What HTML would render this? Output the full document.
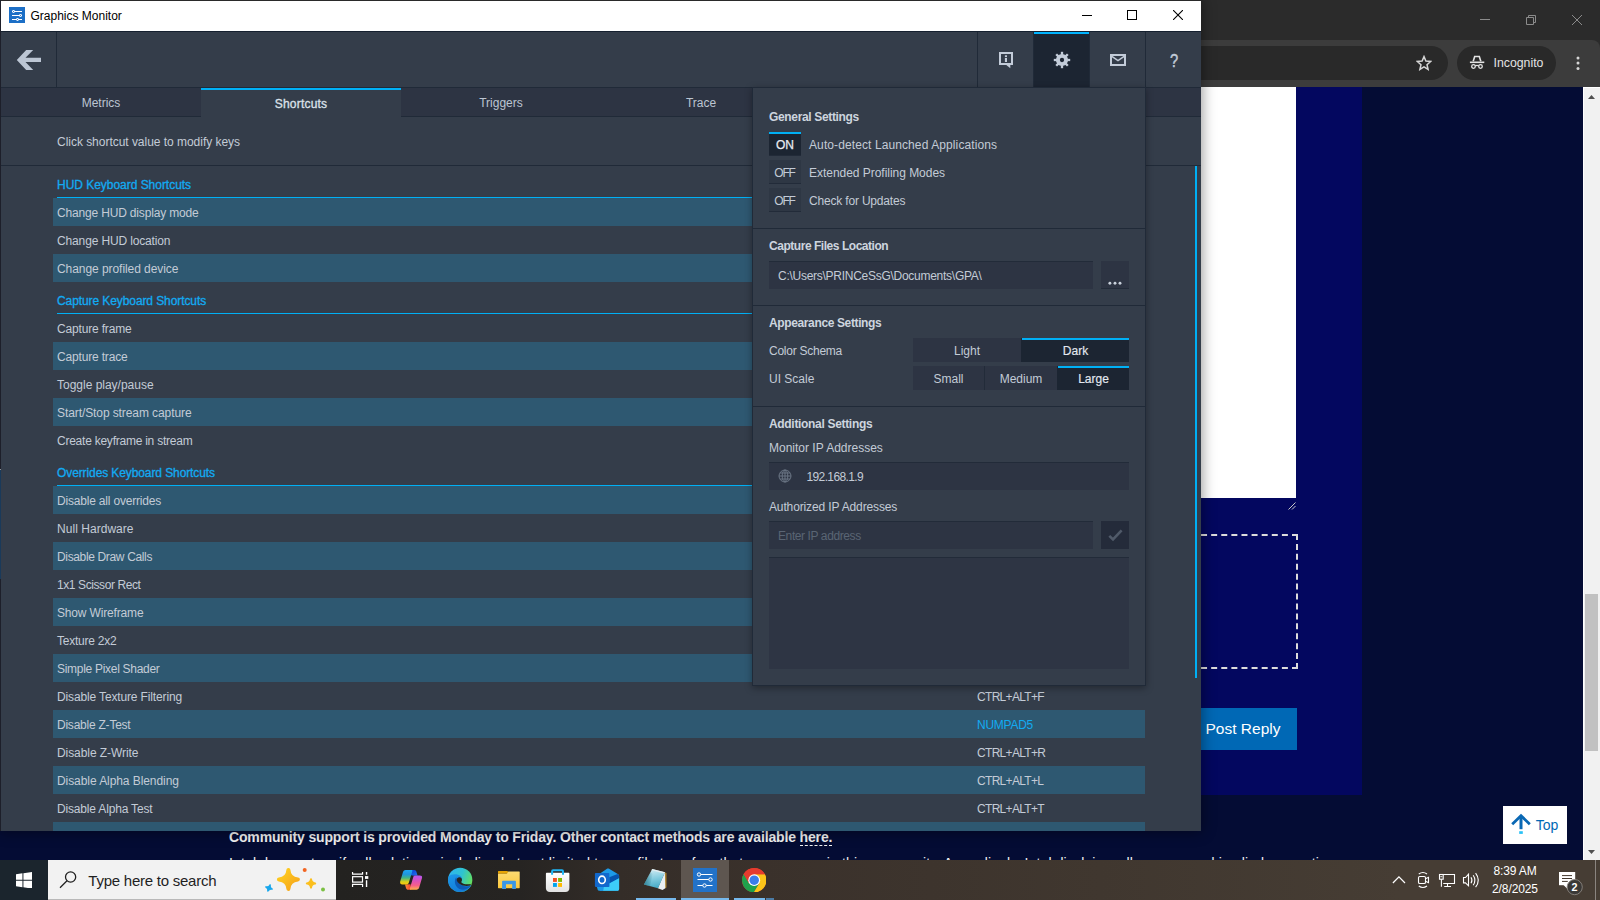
<!DOCTYPE html>
<html>
<head>
<meta charset="utf-8">
<title>Graphics Monitor</title>
<style>
*{box-sizing:border-box;margin:0;padding:0}
html,body{width:1600px;height:900px;overflow:hidden;background:#040c34;font-family:"Liberation Sans",sans-serif;}
.abs{position:absolute}
#screen{position:absolute;left:0;top:0;width:1600px;height:900px;overflow:hidden}

/* ---------- Chrome window (behind) ---------- */
#chrome{position:absolute;left:0;top:0;width:1600px;height:860px;background:#040c34;overflow:hidden}
#cr-frame{position:absolute;left:0;top:0;width:1600px;height:52px;background:#2b2b2b}
#cr-toolbar{position:absolute;left:0;top:40px;width:1600px;height:47px;background:#3c3c3c;border-top-right-radius:8px}
.pill{position:absolute;top:46px;height:34px;background:#292929;border-radius:17px}
#cr-page{position:absolute;left:0;top:87px;width:1583px;height:773px;background:#040c34}
#cr-scroll{position:absolute;left:1583px;top:87px;width:17px;height:773px;background:#f1f1f1;border-left:1px solid #fff;border-top:1px solid #fff}
#cr-thumb{position:absolute;left:1px;top:506px;width:13px;height:157px;background:#c1c1c1}

/* ---------- GPA window ---------- */
#gpa{position:absolute;left:0;top:0;width:1201px;height:831px;background:#343d4a;overflow:hidden;box-shadow:0 0 13px 1px rgba(0,0,0,.42);color:#c3cbd6;font-size:12px}
#gpa-title{position:absolute;left:0;top:0;width:1201px;height:31px;background:#fff;border-top:1px solid #2a2a2a}
#gpa-lborder{position:absolute;left:0;top:0;width:1px;height:831px;background:linear-gradient(180deg,#1d1f2a 0,#1d1f2a 469px,#8f9499 469px,#8f9499 470px,#1a3a5a 470px,#1a3a5a 579px,#1d1f2a 579px);z-index:50}
#gpa-tool{position:absolute;left:0;top:31px;width:1201px;height:57px;background:#343d4a;border-bottom:1px solid #202a38}
.tbtn{position:absolute;top:0;width:56px;height:56px;border-left:1px solid #202a38}
#tabs{position:absolute;left:0;top:88px;width:1201px;height:29px;background:#2d3443;border-bottom:1px solid #202a38}
.tab{position:absolute;top:0;height:28px;width:200px;text-align:center;line-height:30px;color:#bcc5d2;font-size:12px}
.tab.act{background:#343d4a;border-top:2px solid #00b0f5;line-height:28px;height:29px;color:#dce2ea;-webkit-text-stroke:.3px #dce2ea;letter-spacing:.2px}
#hint{position:absolute;left:0;top:117px;width:1201px;height:49px;border-bottom:1px solid #202a38}
.row{position:absolute;left:53px;width:1092px;height:28px;line-height:30px;padding-left:4px;white-space:nowrap}
.row.hl{background:#2e5871}
.row .k{position:absolute;left:924px;top:0;letter-spacing:-0.68px}
.hdr{position:absolute;left:57px;width:1088px;height:32px;border-bottom:1px solid #00b0f5;color:#12abf2;line-height:38px;white-space:nowrap;-webkit-text-stroke:.3px #12abf2}

/* settings panel */
#panel{position:absolute;left:752px;top:87px;width:394px;height:599px;background:#343d4a;border:1px solid #202a38;box-shadow:0 2px 7px rgba(0,0,0,.35);z-index:20}
#panel .sec{position:absolute;left:-1px;width:392px;height:1px;background:#202a38}
#panel .h{position:absolute;line-height:14px;margin-top:1px;font-weight:700;color:#cdd5df;white-space:nowrap}
#panel .l{position:absolute;white-space:nowrap;line-height:14px;margin-top:1px}
.tog{position:absolute;width:32px;height:24px;text-align:center;line-height:14px;padding-top:6px;border-bottom:1px solid #222b39;background:#2e3744}
.tog.on{background:#1c2532;border-top:2px solid #00b0f5;padding-top:4px;color:#e8ecf2;-webkit-text-stroke:.25px #e8ecf2}
.inp{position:absolute;height:28px;background:#2d3443;line-height:30px;padding-left:9px;white-space:nowrap}
.seg{position:absolute;height:24px;background:#2d3443;text-align:center;line-height:26px}
.seg.on{background:#1c2532;border-left:1px solid #1c2532;box-shadow:inset 0 2px 0 #00b0f5;color:#e4e9f0;-webkit-text-stroke:.15px #e4e9f0}

/* ---------- Taskbar ---------- */
#taskbar{position:absolute;left:0;top:860px;width:1600px;height:40px;background:linear-gradient(90deg,#1b252d 0,#1b252d 48px,#232220 340px,#262422 520px,#342d28 620px,#3a312b 760px,#40372f 1100px,#463d34 1400px,#463d34 1600px);z-index:100;color:#fff}
#search{position:absolute;left:48px;top:0;width:288px;height:40px;background:#f2f2f2}
</style>
</head>
<body>
<div id="screen">

<!-- ================= CHROME ================= -->
<div id="chrome">
  <div id="cr-frame"></div>
  <div id="cr-toolbar"></div>
  <div class="pill" style="left:900px;width:548px"></div>
  <div class="pill" style="left:1457px;width:99px"></div>

  <!-- chrome window controls -->
  <svg class="abs" style="left:1480px;top:19px" width="10" height="1"><rect width="10" height="1" fill="#8b8b8b"/></svg>
  <svg class="abs" style="left:1526px;top:15px" width="10" height="10" viewBox="0 0 10 10"><path d="M.5 2.5H7.5V9.5H.5Z" fill="none" stroke="#8b8b8b" stroke-width="1"/><path d="M2.5 2.5V.5H9.5V7.5H7.5" fill="none" stroke="#8b8b8b" stroke-width="1"/></svg>
  <svg class="abs" style="left:1572px;top:15px" width="10" height="10"><path d="M0 0L10 10M10 0L0 10" stroke="#8b8b8b" stroke-width="1" fill="none"/></svg>
  <!-- star -->
  <svg class="abs" style="left:1416px;top:55px" width="16" height="16" viewBox="0 0 16 16"><path d="M8 1.6L9.9 6.1L14.7 6.5L11 9.7L12.1 14.4L8 11.9L3.9 14.4L5 9.7L1.3 6.5L6.1 6.1Z" fill="none" stroke="#d6d6d6" stroke-width="1.5" stroke-linejoin="miter"/></svg>
  <!-- incognito -->
  <svg class="abs" style="left:1469px;top:55px" width="16" height="15" viewBox="0 0 16 15"><g fill="none" stroke="#e3e3e3"><path d="M4.200 6.300L5.700 1.500H10.300L11.800 6.300" stroke-width="1.600"/><path d="M0.900 7.300H15.300" stroke-width="1.600"/><circle cx="4.500" cy="11.500" r="1.800" stroke-width="1.300"/><circle cx="11.500" cy="11.500" r="1.800" stroke-width="1.300"/><path d="M6.200 11Q8 9.900 9.800 11" stroke-width="1.200"/></g></svg>
  <div class="abs" style="left:1493.5px;top:56px;font-size:12.3px;line-height:15px;color:#e3e3e3;white-space:nowrap">Incognito</div>
  <svg class="abs" style="left:1576px;top:56px" width="4" height="14"><circle cx="2" cy="2" r="1.5" fill="#d6d6d6"/><circle cx="2" cy="7" r="1.5" fill="#d6d6d6"/><circle cx="2" cy="12.4" r="1.5" fill="#d6d6d6"/></svg>
  <div id="cr-page">
    <div class="abs" style="left:1201px;top:0;width:95px;height:411px;background:#fff"></div>
    <div class="abs" style="left:1296px;top:0;width:66px;height:708px;background:#03075f"></div>
    <div class="abs" style="left:1100px;top:411px;width:196px;height:297px;background:#03075f"></div>
    <svg class="abs" style="left:1288px;top:414.500px" width="8" height="8"><path d="M7.500 .5L.5 7.500M7.500 4L4 7.500" stroke="#c9c9c9" stroke-width="1" fill="none"/></svg>
    <div class="abs" style="left:1100px;top:447px;width:198px;height:135px;border:2px dashed #dcdcdc"></div>
    <div class="abs" style="left:1100px;top:621px;width:197px;height:42px;background:#0068b5;color:#fff;font-size:15.500px;line-height:42px;white-space:nowrap;padding-left:105.500px">Post Reply</div>
    <div class="abs" style="left:229px;top:741px;font-size:14px;font-weight:700;line-height:18px;color:#f2f2f2;white-space:nowrap;letter-spacing:-.15px">Community support is provided Monday to Friday. Other contact methods are available <span style="border-bottom:1px dashed #f2f2f2">here.</span></div>
    <div class="abs" style="left:229px;top:767px;font-size:14px;line-height:18px;color:#f2f2f2;white-space:nowrap;letter-spacing:.14px">Intel does not verify all solutions, including but not limited to any file transfers that may appear in this community. Accordingly, Intel disclaims all express and implied warranties,</div>
    <div class="abs" style="left:1503px;top:719px;width:64px;height:38px;background:#fff">
      <svg class="abs" style="left:7px;top:7px" width="22" height="22" viewBox="0 0 22 22"><path d="M2.200 11.200L11 2.760L19.800 11.200" fill="none" stroke="#0a68b4" stroke-width="2.800"/><rect x="9.500" y="3" width="3" height="13.200" fill="#0a68b4"/><rect x="9.200" y="18.200" width="3.600" height="2.700" fill="#2ac1f6"/></svg>
      <div class="abs" style="left:32.800px;top:10.200px;font-size:14px;line-height:18px;color:#0068b5">Top</div>
    </div>
  </div>
  <div id="cr-scroll"><div id="cr-thumb"></div>
    <svg class="abs" style="left:4px;top:7px" width="7" height="4"><path d="M0 4L3.500 0L7 4Z" fill="#505050"/></svg>
    <svg class="abs" style="left:4px;top:762px" width="7" height="4"><path d="M0 0L3.500 4L7 0Z" fill="#505050"/></svg>
  </div>
</div>

<!-- ================= GPA WINDOW ================= -->
<div id="gpa">
  <div id="gpa-title">
    <svg class="abs" style="left:9px;top:6px" width="16" height="16" viewBox="0 0 16 16"><rect width="16" height="16" fill="#1c6fc6"/><path d="M3 4.500H13M3 8.500H13M3 12.500H13" stroke="#fff" stroke-width="1.100" fill="none"/><g fill="#fff"><circle cx="4.500" cy="4.500" r="1.400"/><circle cx="11.500" cy="8.500" r="1.400"/><circle cx="8.500" cy="12.500" r="1.400"/></g><g fill="#1c6fc6"><circle cx="4.500" cy="4.500" r=".550"/><circle cx="11.500" cy="8.500" r=".550"/><circle cx="8.500" cy="12.500" r=".550"/></g></svg>
    <div class="abs" style="left:30.5px;top:8px;font-size:12px;line-height:14px;color:#000;white-space:nowrap">Graphics Monitor</div>
    <svg class="abs" style="left:1082px;top:14px" width="10" height="1"><rect width="10" height="1" fill="#000"/></svg>
    <svg class="abs" style="left:1127px;top:9px" width="10" height="10"><rect x=".5" y=".5" width="9" height="9" fill="none" stroke="#000" stroke-width="1"/></svg>
    <svg class="abs" style="left:1173px;top:9px" width="10" height="10"><path d="M0 0L10 10M10 0L0 10" stroke="#000" stroke-width="1.1" fill="none"/></svg>
  </div>
  <div id="gpa-tool">
    <svg class="abs" style="left:16px;top:19px" width="25" height="20" viewBox="-1 0 25 20"><path d="M-0.200 10L9.200 0H16.200L8.500 7.800H24V12.100H8.500L16.200 20H9.200Z" fill="#bcc6d4"/></svg>
    <div class="abs" style="left:56px;top:0;width:1px;height:56px;background:#202a38"></div>
    <div class="tbtn" style="left:977px">
      <svg class="abs" style="left:21px;top:21px" width="15" height="17" viewBox="0 0 15 17"><path d="M1 1H13V12H1Z" fill="none" stroke="#c3ccd9" stroke-width="2"/><path d="M7.300 13H11.300V16.200Z" fill="#c3ccd9"/><rect x="5.900" y="3.300" width="2.100" height="1.800" fill="#c3ccd9"/><rect x="5.900" y="6" width="2.100" height="4" fill="#c3ccd9"/></svg>
    </div>
    <div class="tbtn" style="left:1033px;background:#1c2532;top:1px;height:55px;padding-top:2px"><div class="abs" style="left:0;top:0;width:55px;height:2px;background:#00b4ff"></div>
      <svg class="abs" style="left:18px;top:18px" width="20" height="20" viewBox="-10 -10 20 20"><g fill="#c3ccd9"><circle r="6.100"/><g><rect x="-1.150" y="-8.200" width="2.300" height="3"/><rect x="-1.150" y="5.200" width="2.300" height="3"/><rect x="-8.200" y="-1.150" width="3" height="2.300"/><rect x="5.200" y="-1.150" width="3" height="2.300"/></g><g transform="rotate(45)"><rect x="-1.150" y="-8.200" width="2.300" height="3"/><rect x="-1.150" y="5.200" width="2.300" height="3"/><rect x="-8.200" y="-1.150" width="3" height="2.300"/><rect x="5.200" y="-1.150" width="3" height="2.300"/></g></g><circle r="2.150" fill="#1c2532"/></svg>
    </div>
    <div class="tbtn" style="left:1089px">
      <svg class="abs" style="left:20px;top:23px" width="16" height="12" viewBox="0 0 16 12"><rect x="1" y="1" width="14" height="10" fill="none" stroke="#c3ccd9" stroke-width="2"/><path d="M1.5 2.2L8 6.6L14.5 2.2" fill="none" stroke="#c3ccd9" stroke-width="1.5"/></svg>
    </div>
    <div class="tbtn" style="left:1145px">
      <div class="abs" style="left:0;top:19px;width:56px;text-align:center;font-size:17.500px;line-height:22px;color:#c3ccd9;-webkit-text-stroke:.45px #c3ccd9;transform:scaleX(.84)">?</div>
    </div>
  </div>
  <div id="tabs">
    <div class="tab" style="left:1px">Metrics</div>
    <div class="tab act" style="left:201px">Shortcuts</div>
    <div class="tab" style="left:401px">Triggers</div>
    <div class="tab" style="left:601px">Trace</div>
  </div>
  <div id="hint"><div class="abs" style="left:57px;top:18px;line-height:14px;white-space:nowrap;letter-spacing:-0.03px">Click shortcut value to modify keys</div></div>
  <div id="list">
    <div class="hdr" style="top:166px"><span class="hb" style="letter-spacing:-0.03px">HUD Keyboard Shortcuts</span></div>
    <div class="row hl" style="top:198px"><span style="letter-spacing:-0.17px">Change HUD display mode</span></div>
    <div class="row" style="top:226px"><span style="letter-spacing:-0.14px">Change HUD location</span></div>
    <div class="row hl" style="top:254px"><span style="letter-spacing:-0.06px">Change profiled device</span></div>
    <div class="hdr" style="top:282px"><span class="hb" style="letter-spacing:-0.09px">Capture Keyboard Shortcuts</span></div>
    <div class="row" style="top:314px"><span style="letter-spacing:-0.17px">Capture frame</span></div>
    <div class="row hl" style="top:342px"><span style="letter-spacing:-0.17px">Capture trace</span></div>
    <div class="row" style="top:370px"><span style="letter-spacing:-0.01px">Toggle play/pause</span></div>
    <div class="row hl" style="top:398px"><span style="letter-spacing:-0.09px">Start/Stop stream capture</span></div>
    <div class="row" style="top:426px"><span style="letter-spacing:-0.24px">Create keyframe in stream</span></div>
    <div class="hdr" style="top:454px"><span class="hb" style="letter-spacing:-0.10px">Overrides Keyboard Shortcuts</span></div>
    <div class="row hl" style="top:486px"><span style="letter-spacing:-0.19px">Disable all overrides</span></div>
    <div class="row" style="top:514px"><span style="letter-spacing:0.04px">Null Hardware</span></div>
    <div class="row hl" style="top:542px"><span style="letter-spacing:-0.35px">Disable Draw Calls</span></div>
    <div class="row" style="top:570px"><span style="letter-spacing:-0.41px">1x1 Scissor Rect</span></div>
    <div class="row hl" style="top:598px"><span style="letter-spacing:-0.16px">Show Wireframe</span></div>
    <div class="row" style="top:626px"><span style="letter-spacing:-0.23px">Texture 2x2</span></div>
    <div class="row hl" style="top:654px"><span style="letter-spacing:-0.29px">Simple Pixel Shader</span></div>
    <div class="row" style="top:682px"><span style="letter-spacing:-0.14px">Disable Texture Filtering</span><span class="k">CTRL+ALT+F</span></div>
    <div class="row hl" style="top:710px"><span style="letter-spacing:-0.23px">Disable Z-Test</span><span class="k" style="color:#12abf2;letter-spacing:-.25px">NUMPAD5</span></div>
    <div class="row" style="top:738px"><span style="letter-spacing:-0.07px">Disable Z-Write</span><span class="k">CTRL+ALT+R</span></div>
    <div class="row hl" style="top:766px"><span style="letter-spacing:-0.07px">Disable Alpha Blending</span><span class="k">CTRL+ALT+L</span></div>
    <div class="row" style="top:794px"><span style="letter-spacing:-0.17px">Disable Alpha Test</span><span class="k">CTRL+ALT+T</span></div>
    <div class="row hl" style="top:822px">&nbsp;</div>
    <div class="abs" style="left:1195px;top:166px;width:2px;height:512px;background:#00b0f5"></div>
  </div>
  <div id="panel"><div class="abs" style="left:1px;top:1px">
    <div class="h" style="left:15px;top:20px;letter-spacing:-.34px">General Settings</div>
    <div class="tog on" style="left:15px;top:43px">ON</div><div class="l" style="left:55px;top:48px;letter-spacing:.1px">Auto-detect Launched Applications</div>
    <div class="tog" style="left:15px;top:71px;letter-spacing:-1.2px;text-indent:-1px">OFF</div><div class="l" style="left:55px;top:76px;letter-spacing:-.03px">Extended Profiling Modes</div>
    <div class="tog" style="left:15px;top:99px;letter-spacing:-1.2px;text-indent:-1px">OFF</div><div class="l" style="left:55px;top:104px;letter-spacing:-.18px">Check for Updates</div>
    <div class="sec" style="top:139px"></div>
    <div class="h" style="left:15px;top:149px;letter-spacing:-.46px">Capture Files Location</div>
    <div class="inp" style="left:15px;top:172px;width:324px;letter-spacing:-.27px;border-top:1px solid #222b39;line-height:28px">C:\Users\PRINCeSsG\Documents\GPA\</div>
    <div class="inp" style="left:347px;top:172px;width:28px;padding:0;border-bottom:1px solid #222b39"><svg class="abs" style="left:7px;top:20px" width="14" height="4"><circle cx="1.900" cy="2.200" r="1.450" fill="#c9d1dc"/><circle cx="7" cy="2.200" r="1.450" fill="#c9d1dc"/><circle cx="12" cy="2.200" r="1.450" fill="#c9d1dc"/></svg></div>
    <div class="sec" style="top:216px"></div>
    <div class="h" style="left:15px;top:226px;letter-spacing:-.37px">Appearance Settings</div>
    <div class="l" style="left:15px;top:254px;letter-spacing:-.25px">Color Schema</div>
    <div class="seg" style="left:159px;top:249px;width:108px">Light</div><div class="seg on" style="left:267px;top:249px;width:108px">Dark</div>
    <div class="l" style="left:15px;top:282px">UI Scale</div>
    <div class="seg" style="left:159px;top:277px;width:71px">Small</div><div class="seg" style="left:230px;top:277px;width:73px;border-left:1px solid #222b39">Medium</div><div class="seg on" style="left:303px;top:277px;width:72px">Large</div>
    <div class="sec" style="top:317px"></div>
    <div class="h" style="left:15px;top:327px;letter-spacing:-.32px">Additional Settings</div>
    <div class="l" style="left:15px;top:351px">Monitor IP Addresses</div>
    <div class="inp" style="left:15px;top:373px;width:360px;padding-left:37.5px;border-top:1px solid #222b39;line-height:28px;letter-spacing:-.63px">192.168.1.9
      <svg class="abs" style="left:9px;top:6.3px" width="14" height="14" viewBox="0 0 14 14"><g fill="none" stroke="#6a7584" stroke-width="1"><circle cx="7" cy="7" r="6"/><ellipse cx="7" cy="7" rx="2.8" ry="6"/><path d="M1 7H13M7 1V13M2 4H12M2 10H12"/></g></svg></div>
    <div class="l" style="left:15px;top:410px;letter-spacing:-.13px">Authorized IP Addresses</div>
    <div class="inp" style="left:15px;top:432px;width:324px;color:#5a6574;border-top:1px solid #222b39;line-height:28px;letter-spacing:-.4px">Enter IP address</div>
    <div class="inp" style="left:347px;top:432px;width:28px;padding:0;background:#242b3a"><svg class="abs" style="left:7px;top:8px" width="15" height="13" viewBox="0 0 15 13"><path d="M1.300 6.900L5 10.400L13.600 1.400" fill="none" stroke="#505a69" stroke-width="2.600"/></svg></div>
    <div class="abs" style="left:15px;top:468px;width:360px;height:112px;background:#2e3544;border-top:1px solid #222b39"></div>
  </div></div>
  <div class="abs" style="left:0;top:31px;width:1201px;height:1px;background:#15202f"></div>
  <div id="gpa-lborder"></div>
</div>

<!-- ================= TASKBAR ================= -->
<div id="taskbar">
  <!-- start -->
  <svg class="abs" style="left:15.600px;top:11.600px" width="16.600" height="16.600" viewBox="0 0 17 17"><path d="M0 2.4L6.6 1.4V8H0ZM7.6 1.25L16.6 0V8H7.6ZM0 9H6.6V15.6L0 14.6ZM7.6 9H16.6V17L7.6 15.75Z" fill="#fff"/></svg>
  <div id="search">
    <svg class="abs" style="left:11px;top:10px" width="19" height="19" viewBox="0 0 19 19"><circle cx="11.6" cy="7" r="5.1" fill="none" stroke="#1f1f1f" stroke-width="1.3"/><path d="M8 10.7L1 17.7" stroke="#1f1f1f" stroke-width="1.3"/></svg>
    <div class="abs" style="left:40.3px;top:11.5px;font-size:15px;line-height:18px;color:#1f1f1f;white-space:nowrap;letter-spacing:-.24px">Type here to search</div>
    <svg class="abs" style="left:215px;top:6px" width="66" height="30" viewBox="0 0 66 30">
      <defs><linearGradient id="gy" x1="0" y1="0" x2="1" y2="1"><stop offset="0" stop-color="#ffd21f"/><stop offset="1" stop-color="#f5a21b"/></linearGradient></defs>
      <path d="M25.40 3.90Q26.00 12.80 34.90 13.40Q26.00 14.00 25.40 22.90Q24.80 14.00 15.90 13.40Q24.80 12.80 25.40 3.90Z" fill="url(#gy)" stroke="url(#gy)" stroke-width="4" stroke-linejoin="round"/>
      <path d="M48.00 13.20Q48.30 17.10 52.20 17.40Q48.30 17.70 48.00 21.60Q47.70 17.70 43.80 17.40Q47.70 17.10 48.00 13.20Z" fill="#fbbf1e" stroke="#fbbf1e" stroke-width="2" stroke-linejoin="round"/>
      <path transform="rotate(20 6 22)" d="M6.00 18.80Q6.30 21.70 9.20 22.00Q6.30 22.30 6.00 25.20Q5.70 22.30 2.80 22.00Q5.70 21.70 6.00 18.80Z" fill="#1aa7ec" stroke="#1aa7ec" stroke-width="1.600" stroke-linejoin="round"/>
      <circle cx="41.700" cy="3.900" r="2" fill="#f26522"/><circle cx="60" cy="23.600" r="2" fill="#7bc043"/>
    </svg>
    <div class="abs" style="left:0;top:39px;width:288px;height:1px;background:#b9b9b9"></div>
  </div>
  <!-- task view -->
  <svg class="abs" style="left:344px;top:4px" width="32" height="32" viewBox="0 0 32 32"><g fill="none" stroke="#fff" stroke-width="1.2"><path d="M8.550 8V10.150H18.550V8"/><rect x="8.600" y="12.700" width="9.900" height="5.400"/><path d="M8.550 23.100V20.400H18.550V23.100"/></g><path d="M22.550 8V10.700M22.550 16.200V23.100" stroke="#fff" stroke-width="1.400" fill="none"/><rect x="21" y="12.100" width="3.300" height="2.800" fill="#fff"/></svg>
  <!-- copilot -->
  <svg class="abs" style="left:394px;top:4px" width="32" height="32" viewBox="0 0 32 32">
    <defs>
      <linearGradient id="cp1" x1="0" y1="0" x2="0" y2="1"><stop offset="0" stop-color="#1da8f5"/><stop offset=".3" stop-color="#1f95dc"/><stop offset=".55" stop-color="#42b585"/><stop offset=".8" stop-color="#d6cf1c"/><stop offset="1" stop-color="#ffc60b"/></linearGradient>
      <linearGradient id="cp2" x1="0" y1="0" x2="0" y2="1"><stop offset="0" stop-color="#b457f5"/><stop offset=".4" stop-color="#de52b5"/><stop offset=".7" stop-color="#f6608a"/><stop offset="1" stop-color="#ffb14a"/></linearGradient>
      <linearGradient id="cp3" x1="0" y1="0" x2="1" y2="1"><stop offset="0" stop-color="#0b38cf"/><stop offset="1" stop-color="#2078f2"/></linearGradient>
      <linearGradient id="cp4" x1="0" y1="0" x2="1" y2="0"><stop offset="0" stop-color="#ff8a3c"/><stop offset="1" stop-color="#ef3d2b"/></linearGradient>
    </defs>
    <path d="M16.500 5.900H20.200C21.400 5.900 22.100 6.600 22.400 7.700L23.600 11.800C22.500 11.500 21 11.400 20 11.700L17 11.200Z" fill="url(#cp3)"/>
    <path d="M11 20.600L16.500 20.300L17.300 25.700H14.300C13.100 25.700 12.300 25 12 23.900Z" fill="url(#cp4)"/>
    <path d="M11.700 5.900H17.700C18.300 5.900 18.600 6.400 18.400 7L14.800 18.800C14.400 20 13.600 20.600 12.400 20.600H8.400C6.700 20.600 5.700 19.300 6.200 17.600L9 8C9.400 6.600 10.400 5.900 11.700 5.900Z" fill="url(#cp1)"/>
    <path d="M22.500 25.700H16.500C15.900 25.700 15.600 25.200 15.800 24.600L19.400 12.800C19.800 11.600 20.600 11.500 21.800 11.500H25.800C27.500 11.500 28.500 12.300 28 14L25.200 23.600C24.800 25 23.800 25.700 22.500 25.700Z" fill="url(#cp2)"/>
  </svg>
  <!-- edge -->
  <svg class="abs" style="left:444px;top:4px" width="32" height="32" viewBox="0 0 32 32">
    <defs>
      <linearGradient id="eg1" x1="0" y1=".2" x2="1" y2=".6"><stop offset="0" stop-color="#2fb2f3"/><stop offset=".5" stop-color="#2fc3d0"/><stop offset="1" stop-color="#6fe649"/></linearGradient>
      <linearGradient id="eg2" x1="0" y1="0" x2=".4" y2="1"><stop offset="0" stop-color="#1d98e8"/><stop offset="1" stop-color="#127ad8"/></linearGradient>
      <clipPath id="ec"><circle cx="16.200" cy="15.900" r="12.150"/></clipPath>
    </defs>
    <g clip-path="url(#ec)">
      <rect x="3" y="3" width="27" height="27" fill="url(#eg1)"/>
      <path d="M3 14C5 10.800 9 9.800 12.500 10.300C15.800 10.800 18 12.800 18.200 15L14 18.500L17 20.500C20 22 24 22 27.500 21L29 30H3Z" fill="url(#eg2)"/>
      <path d="M12.200 13.200C10.500 15.500 10.300 19.500 12.700 22.800C15.300 26.300 21 27 25.500 23.300L26.600 21.800C22.500 23 18.500 22.300 16 20L13 16Z" fill="#0d5bb6"/>
      <path d="M12.700 15.800C12.700 14.300 13.900 13.200 15.400 13.200C16.900 13.200 18.100 14.400 18 15.900C17.900 17 17.300 17.600 17.300 18.300C18 19.800 22 20.900 26.800 20.100L26.400 21.600C22 22.400 18 21.800 15.800 20C14 18.800 12.700 17.300 12.700 15.800Z" fill="#27231f"/>
    </g>
  </svg>
  <!-- explorer -->
  <svg class="abs" style="left:493px;top:4px" width="32" height="32" viewBox="0 0 32 32">
    <defs><linearGradient id="fx" x1="0" y1="0" x2="0" y2="1"><stop offset="0" stop-color="#fddb72"/><stop offset="1" stop-color="#fdc93c"/></linearGradient></defs>
    <path d="M5 7.400C5 7.100 5.200 6.900 5.500 6.900H14.300L15.600 8.300L14.500 9.800H5Z" fill="#e7a405"/>
    <path d="M5 9.700H13.900L15.300 7.600H26.200C26.500 7.600 26.700 7.800 26.700 8.100V23.700C26.700 24 26.500 24.200 26.200 24.200H5.500C5.200 24.200 5 24 5 23.700Z" fill="url(#fx)"/>
    <path d="M9.100 17.700C9.100 17.100 9.500 16.700 10.100 16.700H21.900C22.500 16.700 22.900 17.100 22.900 17.700V24.900H19.200V20.300H13V24.900H9.100Z" fill="#3a97e6"/>
  </svg>
  <!-- store -->
  <svg class="abs" style="left:542px;top:4px" width="32" height="32" viewBox="0 0 32 32">
    <defs><linearGradient id="sb" x1="0" y1="0" x2="0" y2="1"><stop offset="0" stop-color="#ffffff"/><stop offset="1" stop-color="#e2e2e2"/></linearGradient></defs>
    <path d="M3.900 9.700C3.900 9.100 4.300 8.700 4.900 8.700H26.400C27 8.700 27.400 9.100 27.400 9.700V24.100C27.400 26.500 25.800 28.100 23.400 28.100H7.900C5.500 28.100 3.900 26.500 3.900 24.100Z" fill="url(#sb)"/>
    <path d="M10.100 10.700V7.200C10.100 6.600 10.500 6.200 11.100 6.200H20C20.600 6.200 21 6.600 21 7.200V10.700" fill="none" stroke="#1fb6f6" stroke-width="2"/>
    <rect x="11" y="14" width="3.900" height="3.900" fill="#f25022"/><rect x="16.100" y="14" width="3.900" height="3.900" fill="#7fba00"/><rect x="11" y="19" width="3.900" height="3.900" fill="#00a4ef"/><rect x="16.100" y="19" width="3.900" height="3.900" fill="#ffb900"/>
  </svg>
  <!-- outlook -->
  <svg class="abs" style="left:591px;top:4px" width="32" height="32" viewBox="0 0 32 32">
    <path d="M9 9.500L16 4.800C16.700 4.300 17.400 4.300 18.100 4.800L27.200 10.200C27.800 10.600 28.100 11.200 28.100 11.900V25C28.100 26.100 27.400 26.800 26.300 26.800H9Z" fill="#1d9be8"/>
    <path d="M18.300 13.200L26.500 9.900L28.100 11.500V14.300L18.300 19.600Z" fill="#0654ae"/>
    <path d="M18.300 19.600L28.100 14.300V25C28.100 26.100 27.400 26.800 26.300 26.800H12L12.500 22.900H18.300Z" fill="#3dcdf9"/>
    <path d="M5.900 22.900H12.600L12.200 26.800H8.500C7.600 26.800 7.100 26.400 6.700 25.700Z" fill="#1c9ae7"/>
    <rect x="3.900" y="9.100" width="14.400" height="13.800" rx=".8" fill="#1268cc"/>
    <ellipse cx="11" cy="15.800" rx="3.300" ry="3.700" fill="none" stroke="#fff" stroke-width="1.600"/>
  </svg>
  <!-- notepad -->
  <svg class="abs" style="left:639px;top:4px" width="32" height="32" viewBox="0 0 32 32">
    <defs>
      <linearGradient id="np" x1=".3" y1="0" x2=".5" y2="1"><stop offset="0" stop-color="#d3ecf3"/><stop offset=".5" stop-color="#86cde0"/><stop offset="1" stop-color="#44a9c6"/></linearGradient>
      <linearGradient id="np2" x1="0" y1="0" x2="1" y2="0"><stop offset="0" stop-color="#2a7a8e" stop-opacity=".85"/><stop offset="1" stop-color="#2a7a8e" stop-opacity="0"/></linearGradient>
    </defs>
    <path d="M26.200 8.400L27.400 9V23.500L26.200 24.300Z" fill="#c8962e"/>
    <path d="M25.900 8.300L26.300 24.200L23.500 26.100L18.800 24.200Z" fill="#e9eff3"/>
    <path d="M13.200 5L26 8.200L19 24.300L5 20.600Z" fill="url(#np)"/>
    <path d="M11.200 8.800L14 9.500L11 22.200L5 20.600Z" fill="url(#np2)"/>
    <path d="M13.200 5L26 8.200L25.400 9.600L12.500 6.300Z" fill="#e3ecef"/>
  </svg>
  <!-- gpa active -->
  <div class="abs" style="left:681px;top:0;width:48px;height:40px;background:#5e5650"></div>
  <svg class="abs" style="left:693px;top:8px" width="24" height="24" viewBox="0 0 24 24"><rect width="24" height="24" fill="#2272c8"/><path d="M5 6.500H19.500M4.500 11.500H19M4.500 17.500H19.500" stroke="#fff" stroke-width="1.100" fill="none"/><g fill="#2272c8" stroke="#fff" stroke-width="1"><circle cx="6" cy="6.500" r="1.700"/><circle cx="17.500" cy="11.500" r="1.700"/><circle cx="11.500" cy="17.500" r="1.700"/></g></svg>
  <!-- chrome -->
  <svg class="abs" style="left:741.900px;top:7.700px" width="24.400" height="24.400" viewBox="-12.200 -12.200 24.400 24.400">
    <circle r="12.200" fill="#e53b2e"/>
    <path d="M-5.110 2.950L-10.570 -6.100A12.200 12.200 0 0 0 -0.300 12.200L5.110 2.950Z" fill="#1fa24c"/>
    <path d="M5.110 2.950L-0.300 12.200A12.200 12.200 0 0 0 10.570 -6.100L10.500 -5.900H0Z" fill="#fcc419"/>
    <path d="M0 -5.900H10.650A12.200 12.200 0 0 0 -10.570 -6.100L-5.110 2.950Z" fill="#e53b2e"/>
    <circle r="5.900" fill="#fff"/><circle r="4.750" fill="#3b7de9"/>
  </svg>
  <!-- running indicators -->
  <div class="abs" style="left:636px;top:38px;width:40px;height:2px;background:#76b9ed"></div>
  <div class="abs" style="left:681px;top:38px;width:48px;height:2px;background:#76b9ed"></div>
  <div class="abs" style="left:734px;top:38px;width:31px;height:2px;background:#76b9ed"></div>
  <div class="abs" style="left:765.500px;top:38px;width:8.500px;height:2px;background:#4b7ba5"></div>
  <!-- tray -->
  <svg class="abs" style="left:1388px;top:4px" width="96" height="32" viewBox="1388 864 96 32"><g fill="none" stroke="#fff" stroke-width="1.100">
    <path d="M1392.900 883L1398.950 876.900L1405 883" stroke-width="1.250"/>
    <rect x="1418.500" y="876.500" width="7" height="7" rx="1.300"/><path d="M1425.500 878.700L1428.500 877.300V882.700L1425.500 881.300"/><path d="M1418.800 874Q1422.900 871 1427 874M1418.800 886Q1422.900 889 1427 886"/>
    <path d="M1443.200 874.500H1454.500V883.500H1443.200"/><path d="M1447.500 883.500V886.500M1444.200 886.500H1451"/><rect x="1439.500" y="874.500" width="3.700" height="4.700"/><path d="M1441.400 879.200V886.800"/><path d="M1440.300 876.700H1442.400" stroke-width=".900"/>
    <path d="M1463.500 877.500H1465.500L1468.500 874.200V885.800L1465.500 882.900H1463.500Z"/><path d="M1471 877.200Q1472.900 880.200 1471 883.200M1473.200 875.200Q1476.600 880.200 1473.200 885.200M1475.600 873.100Q1481 880.200 1475.600 887.200"/>
  </g></svg>
  <div class="abs" style="left:1484px;top:4px;width:62px;text-align:center;font-size:12px;line-height:14px;color:#fff;letter-spacing:-.15px">8:39 AM</div>
  <div class="abs" style="left:1484px;top:22px;width:62px;text-align:center;font-size:12px;line-height:14px;color:#fff;letter-spacing:-.1px">2/8/2025</div>
  <svg class="abs" style="left:1556px;top:4px" width="32" height="36" viewBox="1556 864 32 36"><path d="M1559 872H1575.200V885.200H1559Z" fill="#fff"/><path d="M1563.500 885L1568.500 890V885Z" fill="#fff"/><path d="M1562 875.600H1572M1562 878.500H1572M1562 881.400H1567.800" stroke="#43372d" stroke-width="1"/><circle cx="1574.700" cy="887.100" r="7.600" fill="#3a3836" stroke="#8a857f" stroke-width=".900"/><text x="1574.600" y="890.800" font-family="Liberation Sans" font-size="10.800" font-weight="700" fill="#fff" text-anchor="middle">2</text></svg>
  <div class="abs" style="left:1595px;top:0;width:1px;height:40px;background:#8a847f"></div>
</div>

</div>
</body>
</html>
